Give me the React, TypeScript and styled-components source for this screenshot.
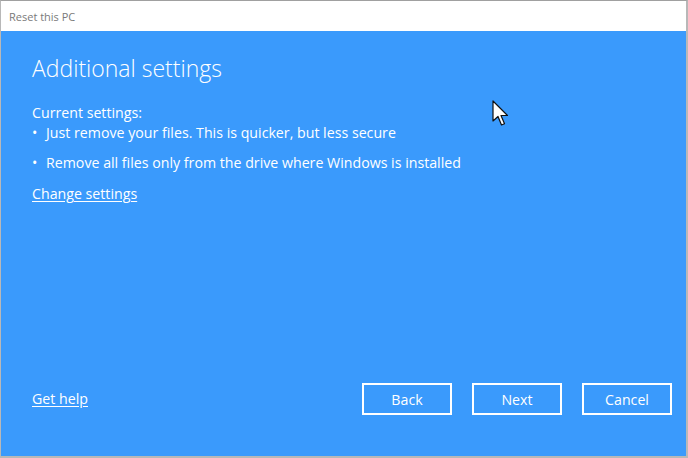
import React from "react";
import styled, { createGlobalStyle } from "styled-components";

const GlobalStyle = createGlobalStyle`
  html, body { margin: 0; padding: 0; background: #ffffff; }
  body { font-family: "Open Sans", "Noto Sans", sans-serif; }
`;

const Window = styled.div`
  position: relative;
  width: 688px;
  height: 458px;
  box-sizing: border-box;
  border-top: 1px solid #a0a0a0;
  border-right: 2px solid #b8b8b8;
  border-bottom: 2px solid #b8b8b8;
  border-left: 1px solid #b8b8b8;
  display: flex;
  flex-direction: column;
  overflow: hidden;
`;

const TitleBar = styled.div`
  height: 30px;
  flex: none;
  display: flex;
  align-items: center;
  padding-left: 8px;
  background: #ffffff;
  color: #7a7a7a;
  font-size: 11px;
`;

const Body = styled.div`
  flex: 1;
  background: #3a9afc;
  color: #ffffff;
  display: flex;
  flex-direction: column;
  padding: 20px 14px 41px 31px;
`;

const Heading = styled.h1`
  margin: 0 0 18px;
  font-weight: 300;
  font-size: 23px;
  line-height: 34px;
`;

const Label = styled.div`
  font-size: 14.2px;
  line-height: 20px;
`;

const BulletList = styled.ul`
  list-style: none;
  margin: 0;
  padding: 0;
  display: flex;
  flex-direction: column;
  gap: 10px;
`;

const Bullet = styled.li`
  font-size: 14.2px;
  line-height: 20px;
  display: flex;
  gap: 8px;
  &::before {
    content: "•";
    width: 6px;
  }
`;

const LinkRow = styled.div`
  margin-top: 9px;
`;

const Link = styled.a`
  color: #ffffff;
  font-size: 14.2px;
  line-height: 20px;
  text-decoration: underline;
  text-underline-offset: 2px;
  cursor: pointer;
`;

const Spacer = styled.div`
  flex: 1;
`;

const Footer = styled.div`
  display: flex;
  align-items: center;
`;

const Buttons = styled.div`
  margin-left: auto;
  display: flex;
  gap: 20px;
`;

const Button = styled.button`
  width: 90px;
  height: 32px;
  box-sizing: border-box;
  border: 2px solid #ffffff;
  background: transparent;
  color: #ffffff;
  font-family: inherit;
  font-size: 14.2px;
  cursor: pointer;
`;

const Cursor = styled.svg`
  position: absolute;
  left: 491px;
  top: 99px;
`;

const App: React.FC = () => (
  <>
    <GlobalStyle />
    <Window>
      <TitleBar>Reset this PC</TitleBar>
      <Body>
        <Heading>Additional settings</Heading>
        <Label>Current settings:</Label>
        <BulletList>
          <Bullet>Just remove your files. This is quicker, but less secure</Bullet>
          <Bullet>Remove all files only from the drive where Windows is installed</Bullet>
        </BulletList>
        <LinkRow>
          <Link>Change settings</Link>
        </LinkRow>
        <Spacer />
        <Footer>
          <Link>Get help</Link>
          <Buttons>
            <Button>Back</Button>
            <Button>Next</Button>
            <Button>Cancel</Button>
          </Buttons>
        </Footer>
      </Body>
      <Cursor width="20" height="28" viewBox="0 0 20 28">
        <path d="M1 1 L1 21 L6 16.5 L9.5 25 L12.5 23.8 L9 15.5 L15.5 15.5 Z" fill="#ffffff" stroke="#111111" strokeWidth="1.2" strokeLinejoin="round" />
      </Cursor>
    </Window>
  </>
);

export default App;
